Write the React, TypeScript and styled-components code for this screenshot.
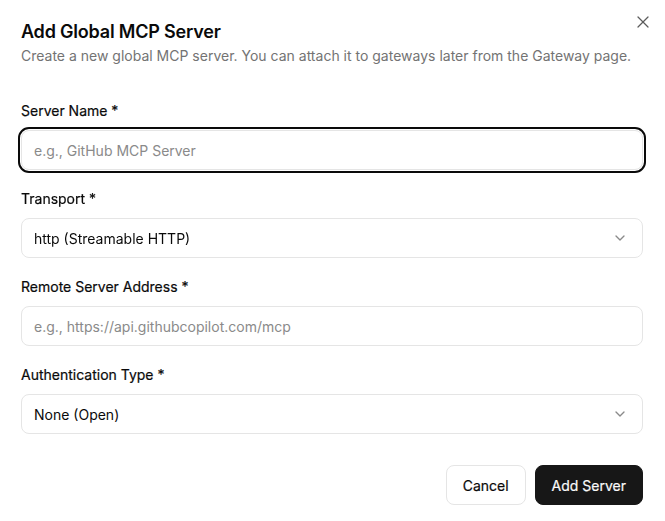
import React from "react";
import styled, { createGlobalStyle } from "styled-components";
import { ChevronDown, X } from "lucide-react";

const GlobalStyle = createGlobalStyle`
  html, body {
    margin: 0;
    padding: 0;
    background: #ffffff;
  }
  body {
    font-family: Inter, "Noto Sans", "Liberation Sans", sans-serif;
    color: #0a0a0a;
    -webkit-font-smoothing: antialiased;
  }
  * {
    box-sizing: border-box;
  }
`;

const Dialog = styled.div`
  position: relative;
  width: 665px;
  height: 521px;
  padding: 21px 22px 0 21px;
  display: flex;
  flex-direction: column;
`;

const CloseButton = styled.button`
  position: absolute;
  top: 12px;
  right: 12px;
  width: 20px;
  height: 20px;
  padding: 0;
  border: none;
  background: none;
  color: #5c5c5c;
  display: flex;
  align-items: center;
  justify-content: center;
  cursor: pointer;
`;

const Header = styled.div`
  display: flex;
  flex-direction: column;
  gap: 3px;
`;

const Title = styled.h2`
  margin: 0;
  font-size: 18px;
  line-height: 22px;
  font-weight: 600;
  letter-spacing: -0.2px;
`;

const Description = styled.p`
  margin: 0;
  font-size: 14px;
  line-height: 20px;
  color: #737373;
`;

const Form = styled.form`
  margin-top: 35px;
  display: flex;
  flex-direction: column;
  gap: 19px;
`;

const Field = styled.div`
  display: flex;
  flex-direction: column;
  gap: 9px;
`;

/* medium weight: the installed Inter jumps from 400 to semibold */
const Label = styled.label`
  font-size: 14px;
  line-height: 20px;
  font-weight: 400;
  -webkit-text-stroke: 0.2px currentColor;
`;

const Input = styled.input<{ $focused?: boolean }>`
  width: 100%;
  height: 40px;
  padding: 0 12px;
  border: 1px solid #e5e5e5;
  border-radius: 8px;
  font-family: inherit;
  font-size: 14px;
  color: #0a0a0a;
  background: #fff;
  outline: ${(p) => (p.$focused ? "2px solid #0a0a0a" : "none")};
  outline-offset: 1px;
  &::placeholder {
    color: #8a8a8a;
  }
`;

const SelectBox = styled.button`
  width: 100%;
  height: 40px;
  padding: 0 14px 0 12px;
  border: 1px solid #e5e5e5;
  border-radius: 8px;
  background: #fff;
  display: flex;
  align-items: center;
  justify-content: space-between;
  font-family: inherit;
  font-size: 14px;
  color: #0a0a0a;
  cursor: pointer;
  svg {
    color: #8a8a8a;
  }
`;

const Footer = styled.div`
  margin-top: 31px;
  display: flex;
  justify-content: flex-end;
  gap: 9px;
`;

const Button = styled.button<{ $primary?: boolean }>`
  height: 40px;
  padding: 0 16px;
  border-radius: 8px;
  font-family: inherit;
  font-size: 14px;
  font-weight: 400;
  -webkit-text-stroke: 0.2px currentColor;
  cursor: pointer;
  border: 1px solid ${(p) => (p.$primary ? "#171717" : "#e5e5e5")};
  background: ${(p) => (p.$primary ? "#171717" : "#ffffff")};
  color: ${(p) => (p.$primary ? "#fafafa" : "#0a0a0a")};
`;

const Select = ({ value }: { value: string }) => (
  <SelectBox type="button">
    <span>{value}</span>
    <ChevronDown size={16} strokeWidth={2} />
  </SelectBox>
);

export default function App() {
  return (
    <>
      <GlobalStyle />
      <Dialog>
        <CloseButton aria-label="Close">
          <X size={20} strokeWidth={1.5} />
        </CloseButton>
        <Header>
          <Title>Add Global MCP Server</Title>
          <Description>
            Create a new global MCP server. You can attach it to gateways later from the Gateway page.
          </Description>
        </Header>
        <Form onSubmit={(e) => e.preventDefault()}>
          <Field>
            <Label>Server Name *</Label>
            <Input $focused autoFocus placeholder="e.g., GitHub MCP Server" />
          </Field>
          <Field>
            <Label>Transport *</Label>
            <Select value="http (Streamable HTTP)" />
          </Field>
          <Field>
            <Label>Remote Server Address *</Label>
            <Input placeholder="e.g., https://api.githubcopilot.com/mcp" />
          </Field>
          <Field>
            <Label>Authentication Type *</Label>
            <Select value="None (Open)" />
          </Field>
        </Form>
        <Footer>
          <Button type="button">Cancel</Button>
          <Button type="button" $primary>
            Add Server
          </Button>
        </Footer>
      </Dialog>
    </>
  );
}
